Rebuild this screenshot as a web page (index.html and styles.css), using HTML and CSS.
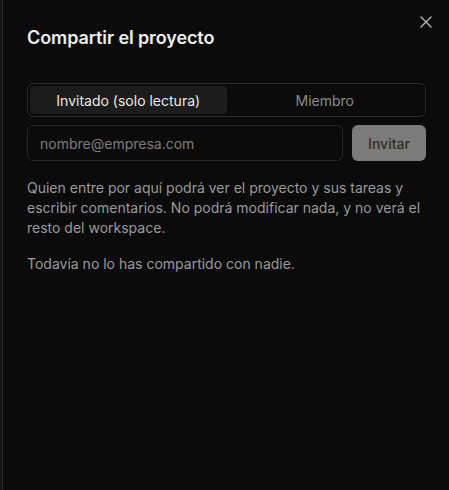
FILE: index.html
```html
<!DOCTYPE html>
<html lang="es">
<head>
<meta charset="utf-8">
<title>Compartir el proyecto</title>
<link rel="stylesheet" href="styles.css">
</head>
<body>
<div class="backdrop">
  <aside class="sheet">
    <button class="close" aria-label="Cerrar">
      <svg width="12" height="12" viewBox="0 0 12 12" fill="none" stroke="currentColor" stroke-width="1.4" stroke-linecap="round"><path d="M1 1L11 11M11 1L1 11"/></svg>
    </button>
    <h2 class="title">Compartir el proyecto</h2>
    <div class="segmented">
      <button class="seg active">Invitado (solo lectura)</button>
      <button class="seg">Miembro</button>
    </div>
    <div class="invite-row">
      <input class="email" type="email" placeholder="nombre@empresa.com">
      <button class="invite-btn">Invitar</button>
    </div>
    <p class="help">Quien entre por aquí podrá ver el proyecto y sus tareas y escribir comentarios. No podrá modificar nada, y no verá el resto del workspace.</p>
    <p class="empty">Todavía no lo has compartido con nadie.</p>
  </aside>
</div>
</body>
</html>
```
FILE: styles.css
```css
* { box-sizing: border-box; }
html, body {
  margin: 0;
  height: 100%;
  background: #161616;
  font-family: Inter, "Noto Sans", sans-serif;
}
.backdrop {
  height: 100%;
  padding-left: 2px;
  display: flex;
}
.sheet {
  position: relative;
  flex: 1;
  background: #0b0b0b;
  border-left: 1px solid #2b2b2b;
  padding: 26px 23px 24px 24px;
}
.close {
  position: absolute;
  top: 16px;
  right: 17px;
  width: 12px;
  height: 12px;
  padding: 0;
  border: 0;
  background: none;
  color: #b5b5b5;
  display: flex;
}
.title {
  margin: 0;
  font-size: 18px;
  font-weight: 600;
  line-height: 24px;
  color: #ededed;
  letter-spacing: -0.1px;
}
.segmented {
  margin-top: 33px;
  display: grid;
  grid-template-columns: 1fr 1fr;
  padding: 2px;
  height: 34px;
  border: 1px solid #282828;
  border-radius: 6px;
}
.seg {
  border: 0;
  background: none;
  border-radius: 4px;
  font-family: inherit;
  font-size: 14px;
  color: #8a8a8a;
  padding: 0;
}
.seg.active {
  background: #1c1c1c;
  color: #e8e8e8;
}
.invite-row {
  margin-top: 8px;
  display: flex;
  gap: 9px;
}
.email {
  flex: 1;
  height: 36px;
  border: 1px solid #282828;
  border-radius: 6px;
  background: #0b0b0b;
  padding: 0 12px;
  font-family: inherit;
  font-size: 14px;
  color: #e8e8e8;
  outline: none;
}
.email::placeholder { color: #7c7c7c; }
.invite-btn {
  width: 74px;
  height: 36px;
  border: 0;
  border-radius: 6px;
  background: #7b7b7b;
  color: #2e2e2e;
  font-family: inherit;
  font-size: 14px;
  font-weight: 500;
}
.help, .empty {
  margin: 0;
  font-size: 14px;
  line-height: 20px;
  color: #9a9a9a;
}
.help { margin-top: 17px; }
.empty { margin-top: 16px; }
```
